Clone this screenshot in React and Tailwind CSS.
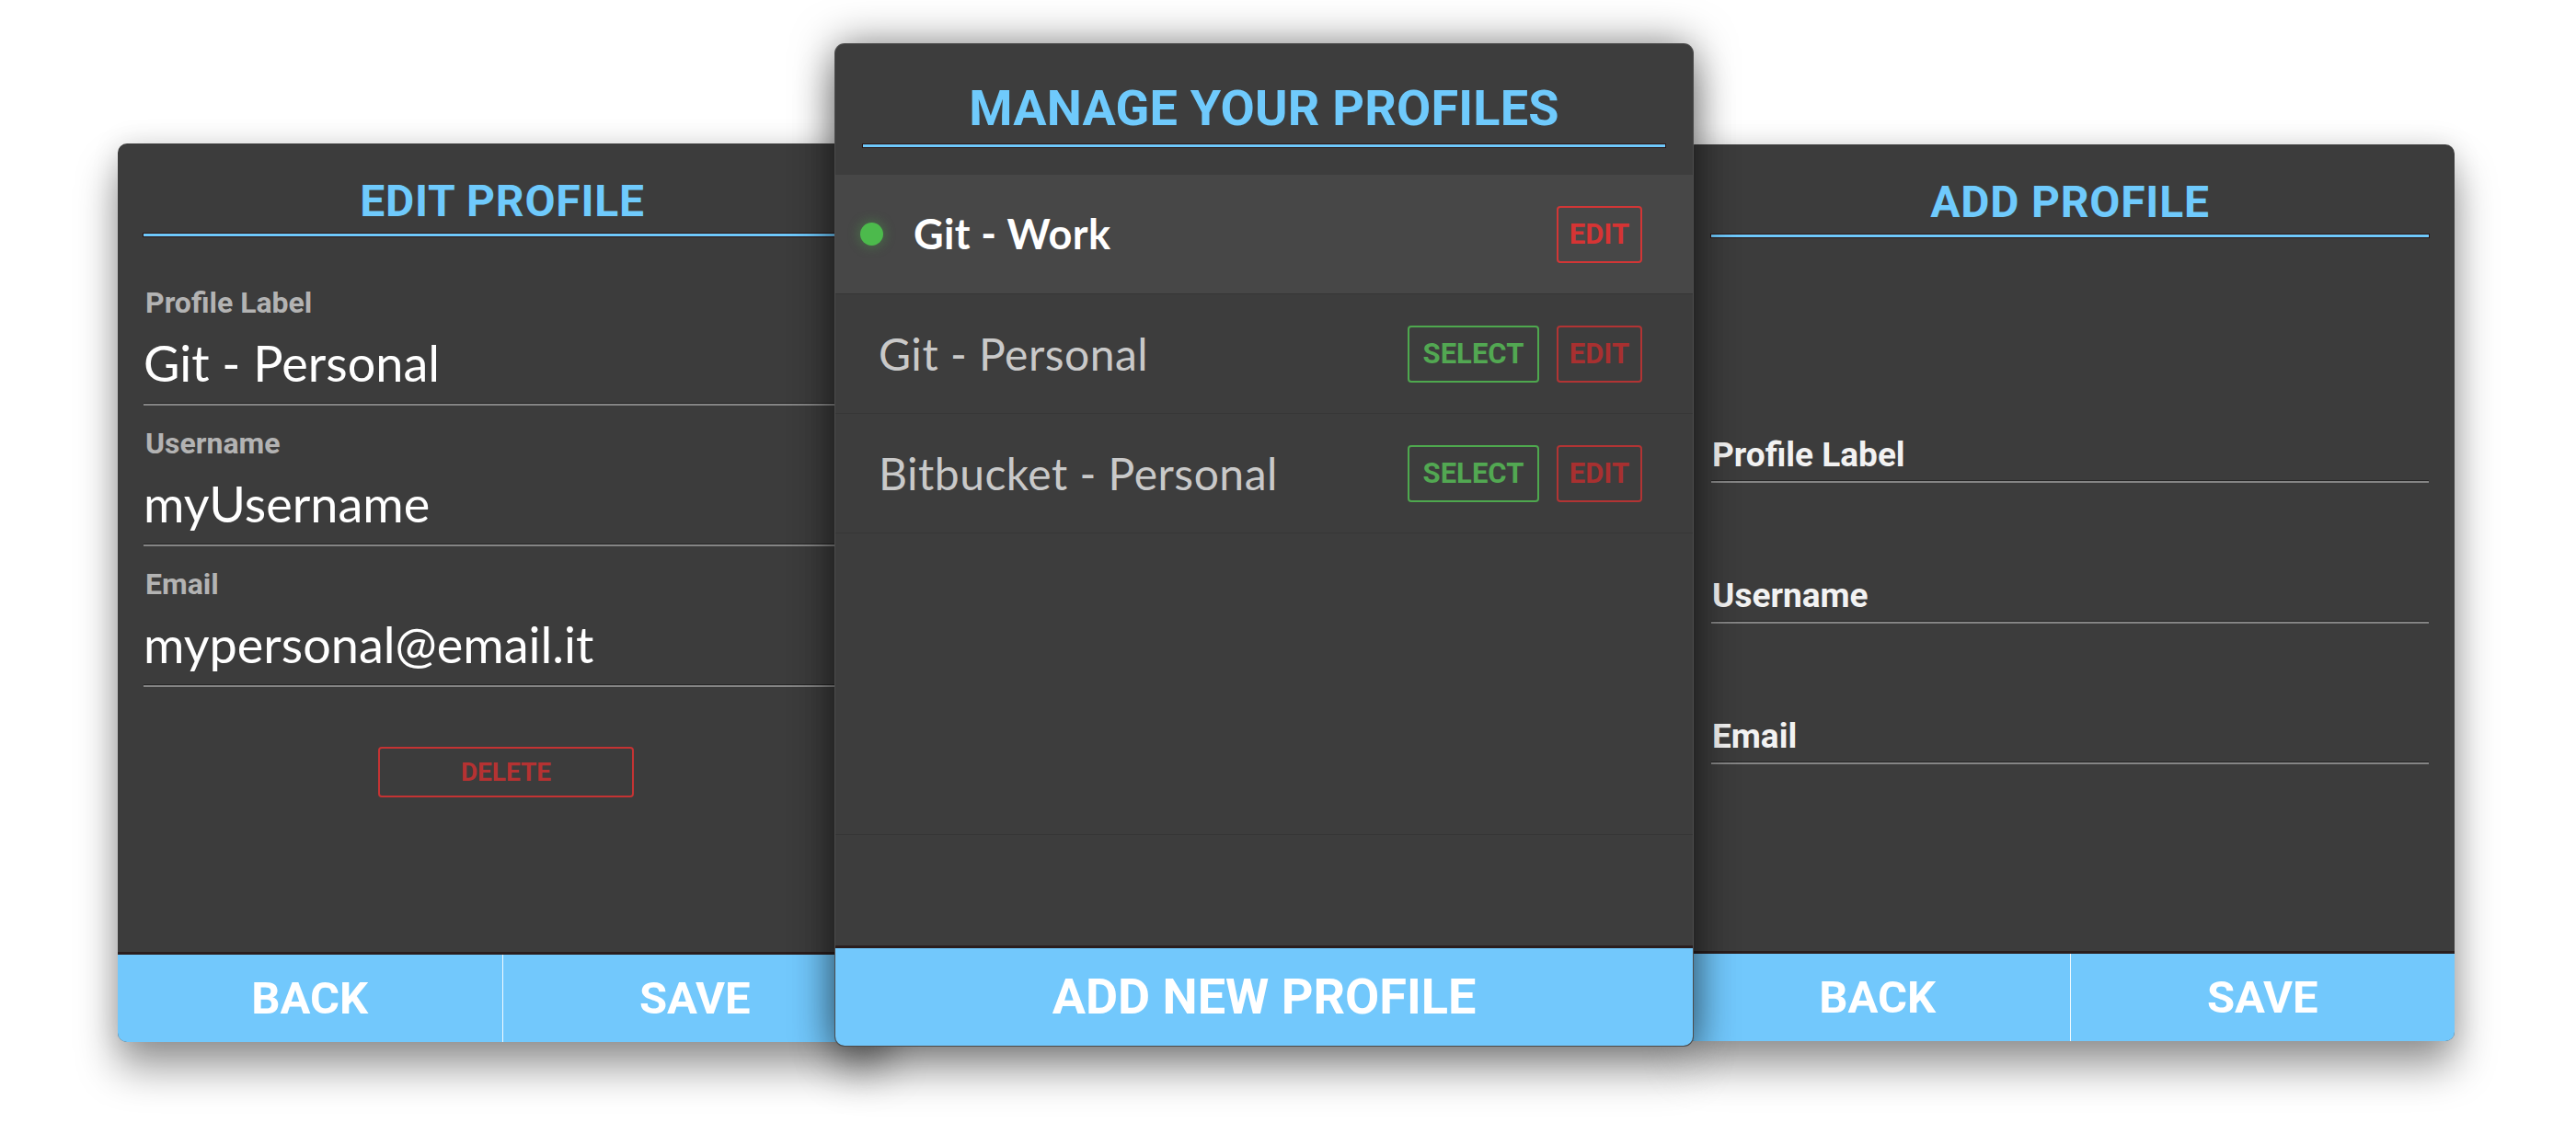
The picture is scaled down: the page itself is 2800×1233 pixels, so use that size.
import React from 'react';

const heading = "font-['Roboto',sans-serif] font-bold";
const body = "font-['Lato',sans-serif]";

const HeaderLine = () => <div className="h-[3px] bg-[#6ec9fb] shadow-[0_0_0_1px_#2a1616]" />;

const Underline = () => <div className="h-[2px] bg-[#858585] shadow-[0_-1px_0_#262626]" />;

const PanelTitle = ({ children, big }) => (
  <div className={big ? 'px-[30px] pt-[43px]' : 'px-[28px] pt-[39px]'}>
    <h2
      className={`${heading} text-center text-[#6fcafc] ${
        big ? 'text-[54px] leading-[54px] tracking-[0.2px]' : 'text-[48px] leading-[48px] tracking-[0.8px]'
      }`}
    >
      {children}
    </h2>
    <div className={big ? 'mt-[12px]' : 'mt-[11px]'}>
      <HeaderLine />
    </div>
  </div>
);

const SideFooter = () => (
  <div className="mt-auto flex h-[98px] border-t-[3px] border-[#2a1e1e] bg-[#72c8fc]">
    <button className={`${heading} flex-1 text-[49px] leading-none text-white`}>BACK</button>
    <div className="w-px bg-white/90" />
    <button className={`${heading} flex-1 text-[49px] leading-none text-white`}>SAVE</button>
  </div>
);

const editFields = [
  { label: 'Profile Label', value: 'Git - Personal' },
  { label: 'Username', value: 'myUsername' },
  { label: 'Email', value: 'mypersonal@email.it' },
];

const EditProfile = () => (
  <div className="mt-[156px] flex h-[977px] w-[836px] shrink-0 flex-col overflow-hidden rounded-[10px] bg-[#3c3c3c] shadow-[0_28px_45px_rgba(0,0,0,0.4),0_0_30px_rgba(0,0,0,0.12)]">
    <PanelTitle>EDIT PROFILE</PanelTitle>
    <div className="flex flex-col gap-[26px] px-[28px] pt-[57px]">
      {editFields.map((f) => (
        <div key={f.label}>
          <div className={`${heading} pl-[2px] text-[32px] leading-[31px] text-[#b3b3b3]`}>{f.label}</div>
          <div className={`${body} mt-[23px] text-[54px] leading-[54px] text-white`}>{f.value}</div>
          <div className="mt-[17px]">
            <Underline />
          </div>
        </div>
      ))}
    </div>
    <div className="mt-[65px] flex justify-center pl-[8px]">
      <button
        className={`${heading} h-[55px] w-[278px] rounded-[4px] border-2 border-[#c43333] text-[28px] leading-none text-[#b53232]`}
      >
        DELETE
      </button>
    </div>
    <SideFooter />
  </div>
);

const profiles = [
  { name: 'Git - Work', active: true },
  { name: 'Git - Personal' },
  { name: 'Bitbucket - Personal' },
];

const ProfileRow = ({ name, active }) => (
  <div
    className={`flex h-[130px] shrink-0 items-center border-b border-[#363636] pr-[55px] ${
      active ? 'bg-[#474747] pl-[27px]' : 'pl-[47px]'
    }`}
  >
    {active && (
      <span className="h-[25px] w-[25px] rounded-full bg-[#4cba4c] shadow-[0_0_14px_rgba(76,186,76,0.45)]" />
    )}
    <span
      className={`${body} ${
        active
          ? 'ml-[33px] font-bold text-[45px] tracking-[0.4px] text-white'
          : 'text-[48px] tracking-[0.5px] text-[#c9c9c9]'
      } leading-none`}
    >
      {name}
    </span>
    <div className="ml-auto flex gap-[19px]">
      {!active && (
        <button
          className={`${heading} h-[62px] w-[143px] rounded-[4px] border-2 border-[#4ea84e] text-[31px] leading-none text-[#52a852]`}
        >
          SELECT
        </button>
      )}
      <button
        className={`${heading} h-[62px] w-[93px] rounded-[4px] border-2 leading-none text-[31px] ${
          active ? 'border-[#d23636] text-[#d63434]' : 'border-[#b23434] text-[#a83030]'
        }`}
      >
        EDIT
      </button>
    </div>
  </div>
);

const ManageProfiles = () => (
  <div className="relative z-10 -ml-[56px] mt-[48px] flex h-[1089px] w-[932px] shrink-0 flex-col overflow-hidden rounded-[10px] bg-[#3d3d3d] shadow-[0_0_45px_rgba(0,0,0,0.5),0_30px_45px_rgba(0,0,0,0.3)] ring-1 ring-[#4c4c4c]">
    <PanelTitle big>MANAGE YOUR PROFILES</PanelTitle>
    <div className="mt-[30px] flex h-[718px] flex-col border-b border-[#353535]">
      {profiles.map((p) => (
        <ProfileRow key={p.name} {...p} />
      ))}
    </div>
    <div className="mt-auto flex h-[109px] items-center justify-center border-t-[3px] border-[#2a1e1e] bg-[#72c8fc]">
      <span className={`${heading} text-[54px] leading-none text-white`}>ADD NEW PROFILE</span>
    </div>
  </div>
);

const addFields = ['Profile Label', 'Username', 'Email'];

const AddProfile = () => (
  <div className="-ml-[8px] mt-[157px] flex h-[975px] w-[836px] shrink-0 flex-col overflow-hidden rounded-[10px] bg-[#3c3c3c] shadow-[0_28px_45px_rgba(0,0,0,0.4),0_0_30px_rgba(0,0,0,0.12)]">
    <PanelTitle>ADD PROFILE</PanelTitle>
    <div className="flex flex-col gap-[105px] px-[28px] pt-[219px]">
      {addFields.map((label) => (
        <div key={label}>
          <div className={`${heading} pl-[1px] text-[37px] leading-[36px] text-[#f2f2f2]`}>{label}</div>
          <div className="mt-[10px]">
            <Underline />
          </div>
        </div>
      ))}
    </div>
    <SideFooter />
  </div>
);

export default function App() {
  return (
    <div className="flex min-h-[1233px] w-[2800px] items-start overflow-hidden bg-white pl-[128px]">
      <EditProfile />
      <ManageProfiles />
      <AddProfile />
    </div>
  );
}
